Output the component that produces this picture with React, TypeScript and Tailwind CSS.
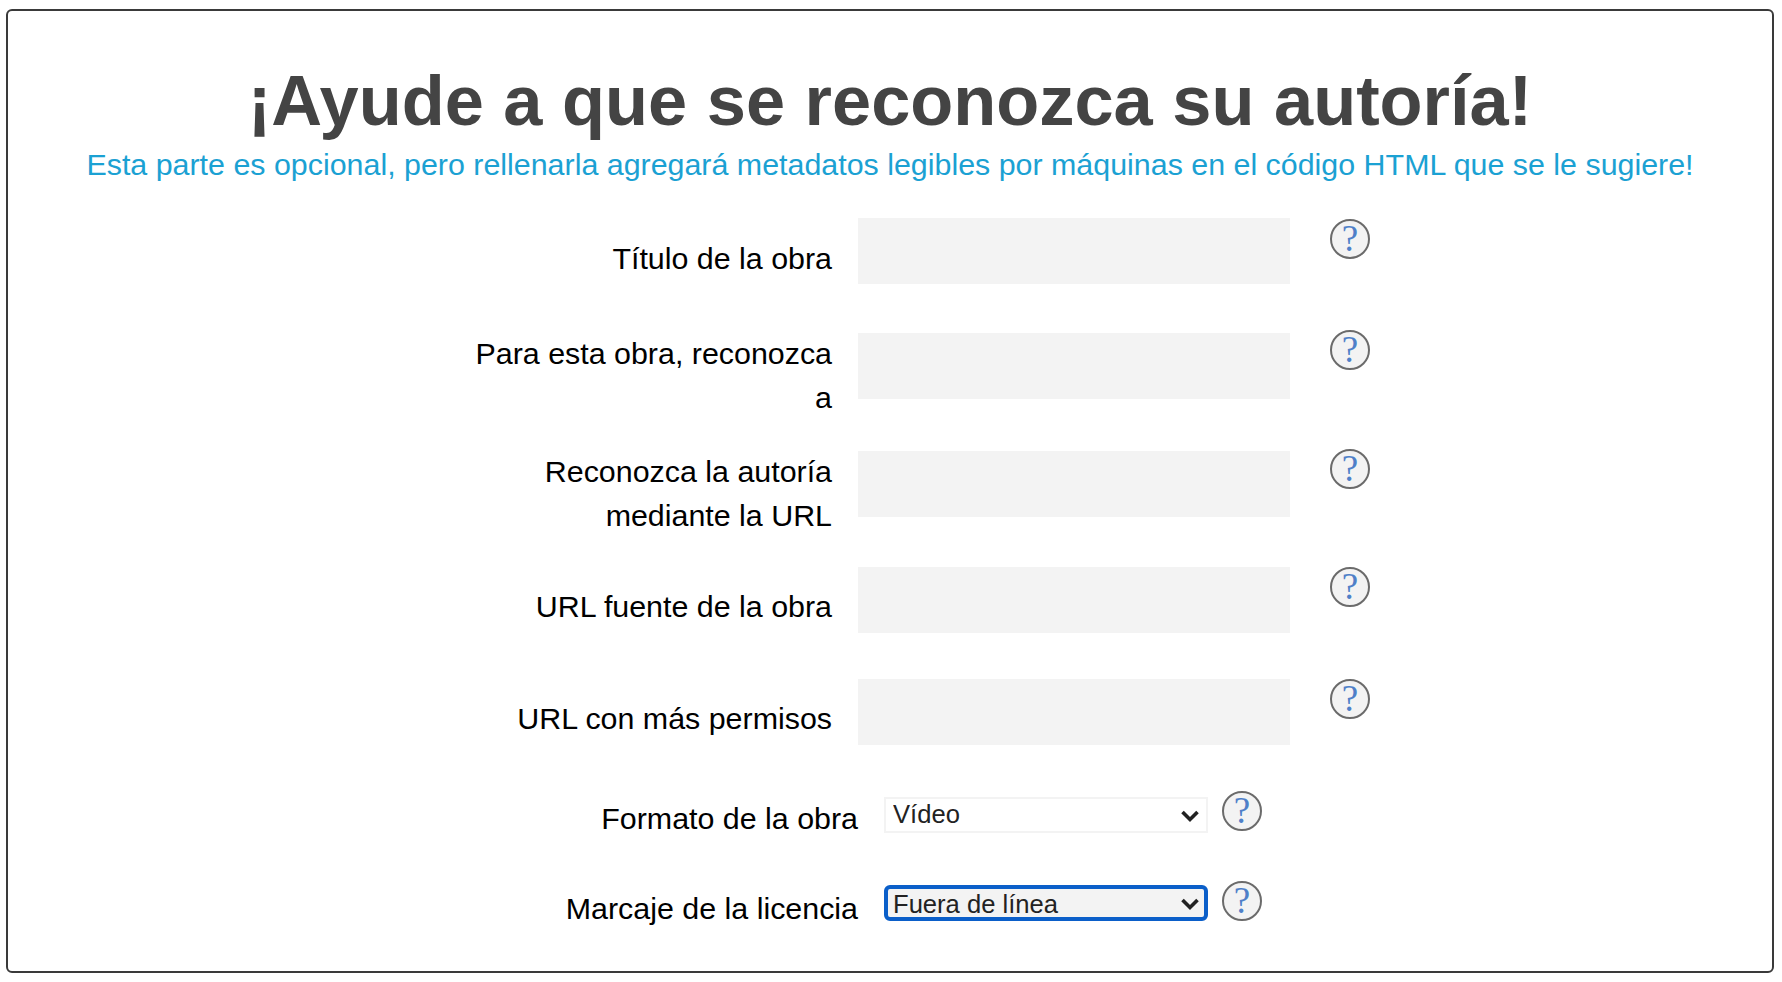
import React from 'react';

const HelpIcon: React.FC = () => (
  <svg width="42" height="42" viewBox="0 0 42 42" className="shrink-0">
    <circle cx="21" cy="21" r="19" fill="#f3f3f3" stroke="#6b6b6b" strokeWidth="2" />
    <text x="21" y="33" textAnchor="middle" fontSize="37" fill="#4f80c8" style={{ fontFamily: '"Liberation Serif", serif' }}>
      ?
    </text>
  </svg>
);

const Chevron: React.FC = () => (
  <svg width="20" height="14" viewBox="0 0 20 14" className="pointer-events-none absolute top-[12px] right-[8px]">
    <path d="M2.5 3 L10 10.5 L17.5 3" fill="none" stroke="#222222" strokeWidth="3.6" />
  </svg>
);

const rows = [
  { label: 'Título de la obra', pad: 'pt-[18px]', height: 'h-[115px]', icon: 'mt-[0px]' },
  { label: 'Para esta obra, reconozca a', pad: 'mt-[-2px]', height: 'h-[118px]', icon: 'mt-[-4px]' },
  { label: 'Reconozca la autoría mediante la URL', pad: 'mt-[-2px]', height: 'h-[116px]', icon: 'mt-[-3px]' },
  { label: 'URL fuente de la obra', pad: 'pt-[17px]', height: 'h-[112px]', icon: 'mt-[-1px]' },
  { label: 'URL con más permisos', pad: 'pt-[17px]', height: 'h-[118px]', icon: 'mt-[-1px]' },
];

const selects = [
  { label: 'Formato de la obra', value: 'Vídeo', focused: false, row: 'h-[88px]', labelPos: 'mt-[-1px]', icon: 'mt-[-7px]' },
  { label: 'Marcaje de la licencia', value: 'Fuera de línea', focused: true, row: 'h-[88px]', labelPos: 'mt-[1px]', icon: 'mt-[-5px]' },
];

export default function App() {
  return (
    <div className="h-[982px] w-[1782px] bg-white pt-[9px] pl-[6px] font-['Liberation_Sans',Arial,sans-serif]">
      <div className="h-[964px] w-[1768px] rounded-[6px] border-2 border-[#3a3a3a] pt-[50px]">
        {/* Heading */}
        <h1 className="text-center text-[70.4px] leading-[80px] font-bold text-[#444444]">¡Ayude a que se reconozca su autoría!</h1>
        <p className="mt-[3px] text-center text-[30.4px] leading-[40px] text-[#1ba1d3]">
          Esta parte es opcional, pero rellenarla agregará metadatos legibles por máquinas en el código HTML que se le sugiere!
        </p>

        {/* Text fields */}
        <div className="mt-[34px]">
          {rows.map((row) => (
            <div key={row.label} className={`flex items-start ${row.height}`}>
              <label className={`ml-[454px] w-[370px] text-right text-[30.4px] leading-[44px] text-black ${row.pad}`}>{row.label}</label>
              <input className="ml-[26px] h-[66px] w-[432px] bg-[#f3f3f3]" />
              <div className={`ml-[39px] ${row.icon}`}>
                <HelpIcon />
              </div>
            </div>
          ))}
        </div>

        {/* Select fields */}
        <div>
          {selects.map((item) => (
            <div key={item.label} className={`flex items-start ${item.row}`}>
              <label className={`ml-[480px] w-[370px] text-right text-[30.4px] leading-[44px] text-black ${item.labelPos}`}>{item.label}</label>
              <div className="relative ml-[26px] h-[36px] w-[324px]">
                <div
                  className={
                    item.focused
                      ? 'h-full overflow-hidden rounded-[6px] border-[4px] border-[#0b5fc9] bg-[#f3f3f3] pl-[5px]'
                      : 'h-full overflow-hidden border-2 border-[#f3f3f3] bg-white pl-[7px]'
                  }
                >
                  <select
                    defaultValue={item.value}
                    className={
                      item.focused
                        ? 'mt-[-4px] block h-[38px] w-full appearance-none bg-transparent text-[25.6px] text-[#222222]'
                        : 'mt-[-5px] block h-[40px] w-full appearance-none bg-transparent text-[25.6px] text-[#222222]'
                    }
                  >
                    <option>{item.value}</option>
                  </select>
                </div>
                <Chevron />
              </div>
              <div className={`ml-[13px] ${item.icon}`}>
                <HelpIcon />
              </div>
            </div>
          ))}
        </div>
      </div>
    </div>
  );
}
